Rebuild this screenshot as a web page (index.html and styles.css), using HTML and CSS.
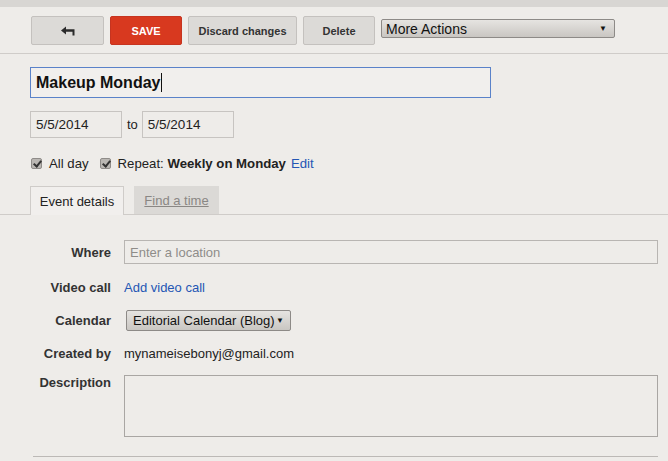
FILE: index.html
```html
<!DOCTYPE html>
<html lang="en">
<head>
    <meta charset="UTF-8">
    <title>Edit event</title>
    <link rel="stylesheet" href="styles.css">
</head>
<body>

<div class="topbar"></div>

<!-- toolbar -->
<div class="toolbar">
    <button class="btn back" title="Back">
        <svg width="16" height="10" viewBox="0 0 16 10">
            <path d="M1 4.5 L6 0.5 L6 3.2 L14.5 3.2 L14.5 9.5 L12.5 9.5 L12.5 5.8 L6 5.8 L6 8.5 Z" fill="#2b2b2b"/>
        </svg>
    </button>
    <button class="btn save">SAVE</button>
    <button class="btn wide">Discard changes</button>
    <button class="btn">Delete</button>
    <div class="select more">
        <span>More Actions</span>
        <span class="arrow">&#9660;</span>
    </div>
</div>

<div class="content">
    <div class="title-box">Makeup Monday<span class="caret"></span></div>

    <div class="dates">
        <div class="date">5/5/2014</div>
        <span class="to">to</span>
        <div class="date">5/5/2014</div>
    </div>

    <div class="options">
        <span class="check"></span>
        <span>All day</span>
        <span class="check second"></span>
        <span>Repeat: <b>Weekly on Monday</b></span>
        <a class="link edit">Edit</a>
    </div>

    <div class="tabs">
        <div class="tab active">Event details</div>
        <div class="tab off">Find a time</div>
    </div>
</div>

<div class="tab-line"></div>

<div class="details">
    <div class="row where-row">
        <label>Where</label>
        <div class="field"><div class="where">Enter a location</div></div>
    </div>
    <div class="row">
        <label>Video call</label>
        <div class="field"><a class="link">Add video call</a></div>
    </div>
    <div class="row">
        <label>Calendar</label>
        <div class="field">
            <div class="select cal">
                <span>Editorial Calendar (Blog)</span>
                <span class="arrow">&#9660;</span>
            </div>
        </div>
    </div>
    <div class="row">
        <label>Created by</label>
        <div class="field">mynameisebonyj@gmail.com</div>
    </div>
    <div class="row top">
        <label>Description</label>
        <div class="field"><div class="desc"></div></div>
    </div>
    <div class="bottom-line"></div>
</div>

</body>
</html>
```

FILE: styles.css
```css
body {
    font-family: "Liberation Sans", Arial, sans-serif;
    font-size: 13px;
    color: #222;
    background-color: #eeece9;
    margin: 0;
    padding: 0;
}

.topbar {
    height: 7px;
    background-color: #d8d6d3;
}

.toolbar {
    height: 47px;
    box-sizing: border-box;
    padding: 9px 0 0 31px;
    display: flex;
    align-items: flex-start;
    gap: 6px;
    border-bottom: 1px solid #cfccc9;
}

.btn {
    box-sizing: border-box;
    height: 29px;
    width: 72px;
    padding: 0;
    font-family: inherit;
    font-size: 11px;
    font-weight: bold;
    color: #333;
    background-color: #dcdad7;
    border: 1px solid #c4c1be;
    border-radius: 2px;
    display: flex;
    align-items: center;
    justify-content: center;
}

.btn.back {
    width: 73px;
}

.btn.wide {
    width: 109px;
}

.btn.save {
    background-color: #d8391f;
    border-color: #c63420;
    color: #fff;
}

.select {
    box-sizing: border-box;
    display: flex;
    align-items: center;
    justify-content: space-between;
    border: 1px solid #8d8a87;
    border-radius: 2px;
    background: linear-gradient(#e6e4e1, #c9c6c2);
    color: #111;
}

.select .arrow {
    font-size: 8px;
    color: #111;
}

.more {
    margin-top: 3px;
    width: 234px;
    height: 19px;
    padding: 0 7px 0 4px;
    font-size: 14px;
}

.content {
    padding: 13px 0 0 30px;
}

.title-box {
    box-sizing: border-box;
    width: 461px;
    height: 31px;
    border: 1px solid #5a82c9;
    background-color: #f1efed;
    padding: 0 5px;
    font-size: 16px;
    font-weight: bold;
    color: #111;
    display: flex;
    align-items: center;
}

.caret {
    display: inline-block;
    width: 1px;
    height: 19px;
    background-color: #111;
    margin-left: 1px;
}

.dates {
    margin-top: 13px;
    display: flex;
    align-items: center;
}

.date {
    box-sizing: border-box;
    width: 92px;
    height: 27px;
    border: 1px solid #c7c4c1;
    padding: 0 5px;
    font-size: 13.5px;
    display: flex;
    align-items: center;
}

.to {
    margin: 0 4px 0 5px;
}

.options {
    margin-top: 17px;
    height: 16px;
    display: flex;
    align-items: center;
    font-size: 13.2px;
}

.check {
    box-sizing: border-box;
    width: 11px;
    height: 11px;
    border: 1px solid #8f8c89;
    border-radius: 2px;
    background-color: #bab7b3;
    margin: 0 7px 0 1px;
    position: relative;
}

.check::after {
    content: "";
    position: absolute;
    left: 3px;
    top: 0px;
    width: 3px;
    height: 6px;
    border: solid #333;
    border-width: 0 2px 2px 0;
    transform: rotate(40deg);
}

.check.second {
    margin-left: 11px;
}

.link {
    color: #2456b4;
}

.link.edit {
    margin-left: 5px;
}

.tabs {
    margin-top: 15px;
    display: flex;
    gap: 10px;
    align-items: flex-end;
}

.tab {
    box-sizing: border-box;
    height: 28px;
    display: flex;
    align-items: center;
    justify-content: center;
}

.tab.active {
    width: 94px;
    border: 1px solid #cfccc9;
    border-bottom: none;
    background-color: #f1efed;
    margin-bottom: -1px;
    height: 29px;
    position: relative;
}

.tab.off {
    width: 85px;
    background-color: #dbd9d6;
    color: #8a8784;
    text-decoration: underline;
}

.tab-line {
    border-top: 1px solid #cfccc9;
}

.details {
    padding-top: 25px;
    padding-right: 10px;
}

.row {
    display: flex;
    align-items: center;
    min-height: 23px;
    margin-bottom: 10px;
}

.row.where-row {
    margin-bottom: 12px;
}

.row.top {
    align-items: flex-start;
    margin-top: 2px;
}

.row label {
    width: 111px;
    text-align: right;
    font-weight: bold;
    color: #333;
    margin-right: 13px;
    flex-shrink: 0;
}

.field {
    flex: 1;
}

.where {
    box-sizing: border-box;
    height: 24px;
    border: 1px solid #b8b5b2;
    padding: 0 5px;
    color: #8f8c89;
    display: flex;
    align-items: center;
}

.cal {
    margin-left: 2px;
    width: 165px;
    height: 21px;
    padding: 0 6px 0 6px;
    font-size: 13px;
}

.desc {
    box-sizing: border-box;
    height: 62px;
    border: 1px solid #a9a6a3;
}

.bottom-line {
    margin: 19px 0 0 33px;
    border-top: 1px solid #bcb9b6;
}
```
